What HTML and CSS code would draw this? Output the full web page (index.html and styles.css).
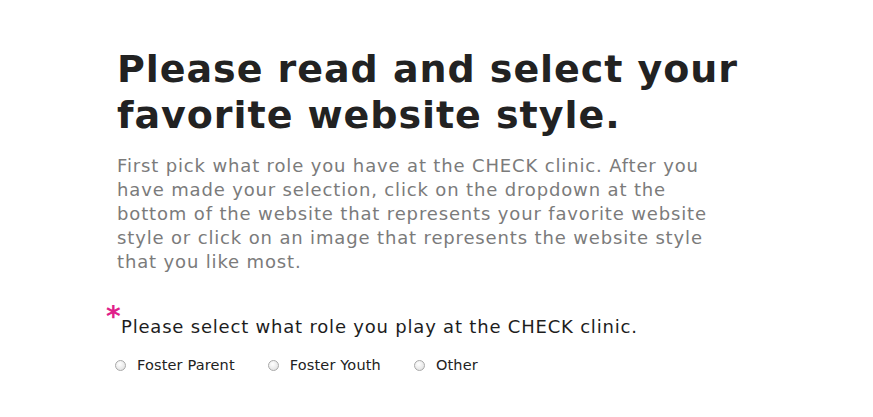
FILE: index.html
```html
<!DOCTYPE html>
<html>
<head>
<meta charset="utf-8">
<link rel="stylesheet" href="styles.css">
</head>
<body>
<main class="page">
  <h1 class="title">Please read and select your favorite website style.</h1>
  <p class="intro">First pick what role you have at the CHECK clinic. After you have made your selection, click on the dropdown at the bottom of the website that represents your favorite website style or click on an image that represents the website style that you like most.</p>
  <div class="question">
    <div class="q-label"><span class="req">*</span><span class="q-text">Please select what role you play at the CHECK clinic.</span></div>
    <div class="options">
      <label class="opt"><span class="radio"></span>Foster Parent</label>
      <label class="opt"><span class="radio"></span>Foster Youth</label>
      <label class="opt"><span class="radio"></span>Other</label>
    </div>
  </div>
</main>
</body>
</html>
```
FILE: styles.css
```css
html, body {
  margin: 0;
  padding: 0;
  background: #ffffff;
}
body {
  font-family: "DejaVu Sans", "Noto Sans", sans-serif;
}
.page {
  padding: 46px 0 0 117px;
  width: 660px;
}
.title {
  margin: 0;
  font-size: 38px;
  line-height: 46px;
  font-weight: bold;
  color: #222222;
  letter-spacing: 0.95px;
}
.intro {
  margin: 16px 0 0 0;
  font-size: 18px;
  line-height: 24px;
  color: #7b7b7b;
  letter-spacing: 0.85px;
  width: 610px;
}
.question {
  margin-top: 33px;
}
.q-label {
  display: flex;
  align-items: flex-start;
  margin-left: -11px;
  color: #1d1d1d;
}
.req {
  color: #e0208a;
  font-size: 28px;
  font-weight: bold;
  line-height: 20px;
  width: 15px;
}
.q-text {
  font-size: 18px;
  line-height: 24px;
  letter-spacing: 0.8px;
  padding-top: 8px;
}
.options {
  display: flex;
  margin-top: 18px;
}
.opt {
  display: flex;
  align-items: center;
  font-size: 14.5px;
  letter-spacing: 0.15px;
  color: #222;
  margin-right: 35px;
}
.radio {
  width: 11px;
  height: 11px;
  border-radius: 50%;
  border: 1px solid #a9a9a9;
  background: radial-gradient(circle at 40% 35%, #ffffff 0%, #e6e6e6 70%, #d0d0d0 100%);
  margin: 0 11px 0 -2px;
  box-sizing: border-box;
}
```
